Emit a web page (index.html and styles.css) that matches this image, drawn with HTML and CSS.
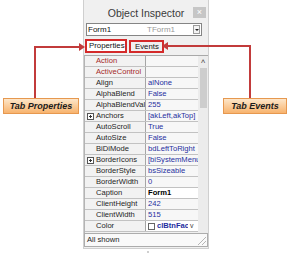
FILE: index.html
```html
<!DOCTYPE html>
<html lang="en">
<head>
    <meta charset="UTF-8">
    <title>Object Inspector</title>
    <link rel="stylesheet" href="styles.css">
</head>
<body>
    <div class="page">
        <div class="inspector">
            <div class="titlebar">
                <span></span>
                <span class="title">Object Inspector</span>
                <span class="close">&times;</span>
            </div>

            <div class="combo">
                <span class="combo-name">Form1</span>
                <span class="combo-type">TForm1</span>
                <span class="combo-btn"></span>
            </div>

            <div class="tabs">
                <span class="tab tab-props">Properties</span>
                <span class="tab tab-events">Events</span>
            </div>

            <div class="grid">
                <div class="rows">
                    <div class="row"><span class="name event">Action</span><span class="value"></span></div>
                    <div class="row"><span class="name event">ActiveControl</span><span class="value"></span></div>
                    <div class="row"><span class="name">Align</span><span class="value">alNone</span></div>
                    <div class="row"><span class="name">AlphaBlend</span><span class="value">False</span></div>
                    <div class="row"><span class="name">AlphaBlendValue</span><span class="value">255</span></div>
                    <div class="row"><span class="name expand"><span class="plus"></span>Anchors</span><span class="value">[akLeft,akTop]</span></div>
                    <div class="row"><span class="name">AutoScroll</span><span class="value">True</span></div>
                    <div class="row"><span class="name">AutoSize</span><span class="value">False</span></div>
                    <div class="row"><span class="name">BiDiMode</span><span class="value">bdLeftToRight</span></div>
                    <div class="row"><span class="name expand"><span class="plus"></span>BorderIcons</span><span class="value">[biSystemMenu]</span></div>
                    <div class="row"><span class="name">BorderStyle</span><span class="value">bsSizeable</span></div>
                    <div class="row"><span class="name">BorderWidth</span><span class="value">0</span></div>
                    <div class="row"><span class="name">Caption</span><span class="value value-edit">Form1</span></div>
                    <div class="row"><span class="name">ClientHeight</span><span class="value">242</span></div>
                    <div class="row"><span class="name">ClientWidth</span><span class="value">515</span></div>
                    <div class="row"><span class="name">Color</span><span class="value value-color"><span class="swatch"></span><b>clBtnFace</b><span class="drop">v</span></span></div>
                </div>
                <div class="scrollbar">
                    <span class="arrow">&#708;</span>
                    <span class="thumb"></span>
                </div>
            </div>

            <div class="status">
                <span>All shown</span>
                <span class="grip"></span>
            </div>
        </div>
        <div class="dot"></div>

        <svg class="callouts" width="290" height="255" viewBox="0 0 290 255">
            <polyline points="35,98 35,47 80,47" fill="none" stroke="#c23b3b" stroke-width="2"/>
            <polygon points="79,43 85,47 79,51" fill="#c23b3b"/>
            <polyline points="250,98 250,46 167,46" fill="none" stroke="#c23b3b" stroke-width="2"/>
            <polygon points="168,42 162,46 168,50" fill="#c23b3b"/>
        </svg>
        <div class="label label-props">Tab Properties</div>
        <div class="label label-events">Tab Events</div>
    </div>
</body>
</html>
```

FILE: styles.css
```css
* {
    margin: 0;
    padding: 0;
    box-sizing: border-box;
}

body {
    width: 290px;
    height: 255px;
    background: #fff;
    font-family: "Liberation Sans", Arial, sans-serif;
    overflow: hidden;
}

.page {
    position: relative;
    width: 290px;
    height: 255px;
}

.inspector {
    margin-left: 83px;
    width: 126px;
    height: 249px;
    background: #f0f0f0;
    border-left: 1px solid #cfcfcf;
    border-right: 1px solid #cfcfcf;
    border-bottom: 1px solid #cfcfcf;
    display: flex;
    flex-direction: column;
}

.titlebar {
    height: 22px;
    display: grid;
    grid-template-columns: 1fr auto 1fr;
    align-items: center;
}

.title {
    font-size: 10.5px;
    color: #3a3a3a;
    padding-top: 3px;
}

.close {
    justify-self: end;
    width: 13px;
    height: 11px;
    margin-right: 2px;
    margin-top: 3px;
    background: #c6c6c6;
    color: #fff;
    font-size: 9px;
    line-height: 11px;
    text-align: center;
}

.combo {
    margin: 1px 6px 0 2px;
    height: 13px;
    background: #fff;
    border: 1px solid #858585;
    display: flex;
    align-items: center;
    font-size: 8px;
}

.combo-name {
    width: 60px;
    padding-left: 1px;
    color: #111;
}

.combo-type {
    flex: 1;
    color: #9a9a9a;
}

.combo-btn {
    width: 7px;
    height: 9px;
    margin-right: 1px;
    border: 1px solid #9c9c9c;
    background: #f4f4f4;
    position: relative;
}

.combo-btn::after {
    content: "";
    position: absolute;
    left: 1px;
    top: 3px;
    border-left: 2px solid transparent;
    border-right: 2px solid transparent;
    border-top: 2px solid #222;
}

.tabs {
    display: flex;
    gap: 2px;
    margin: 3px 0 0 1px;
    height: 14px;
}

.tab {
    border: 2px solid #d42a2a;
    font-size: 7.8px;
    line-height: 10px;
    padding-left: 2px;
    color: #111;
}

.tab-props {
    width: 42px;
    background: #fff;
}

.tab-events {
    width: 35px;
    margin-top: 1px;
    padding-left: 4px;
}

.grid {
    margin-top: 2px;
    height: 178px;
    display: flex;
    border-top: 1px solid #a9a9a9;
    border-left: 1px solid #b4b4b4;
}

.rows {
    flex: 1;
    min-width: 0;
}

.row {
    height: 11px;
    display: flex;
    border-bottom: 1px solid #c2c2c2;
    font-size: 7.6px;
    line-height: 10px;
}

.name {
    width: 61px;
    padding-left: 11px;
    background: #f2f2f2;
    border-right: 1px solid #a6a6a6;
    color: #1e1e1e;
    white-space: nowrap;
    overflow: hidden;
    display: flex;
    align-items: center;
}

.name.event {
    color: #a52a2a;
}

.name.expand {
    padding-left: 2px;
}

.plus {
    width: 7px;
    height: 7px;
    margin-right: 2px;
    border: 1px solid #555;
    background: #fff;
    position: relative;
    flex: none;
}

.plus::before,
.plus::after {
    content: "";
    position: absolute;
    background: #333;
}

.plus::before {
    left: 1px;
    top: 2px;
    width: 3px;
    height: 1px;
}

.plus::after {
    left: 2px;
    top: 1px;
    width: 1px;
    height: 3px;
}

.value {
    flex: 1;
    min-width: 0;
    padding-left: 2px;
    background: #f7f7f7;
    color: #1f2fa0;
    white-space: nowrap;
    overflow: hidden;
}

.value-edit {
    background: #fff;
    color: #000;
    font-weight: bold;
}

.value-color {
    display: flex;
    align-items: center;
    background: #fff;
}

.value-color b {
    flex: 1;
    min-width: 0;
    overflow: hidden;
}

.swatch {
    width: 7px;
    height: 7px;
    margin-right: 2px;
    border: 1px solid #666;
    background: #fff;
    flex: none;
}

.drop {
    width: 6px;
    margin: 0 2px 0 2px;
    flex: none;
    color: #444;
    font-size: 7px;
}

.scrollbar {
    width: 10px;
    background: #ececec;
    display: flex;
    flex-direction: column;
    align-items: center;
}

.arrow {
    font-size: 8px;
    line-height: 11px;
    height: 11px;
    color: #444;
}

.thumb {
    margin-top: 1px;
    width: 7px;
    height: 40px;
    background: #cdcdcd;
}

.status {
    height: 14px;
    border: 1px solid #acacac;
    background: #f9f9f9;
    font-size: 7.6px;
    line-height: 12px;
    padding-left: 2px;
    color: #1e1e1e;
    display: flex;
    justify-content: space-between;
}

.grip {
    width: 8px;
    height: 8px;
    margin: 3px 1px 0 0;
    background: linear-gradient(135deg, transparent 45%, #b5b5b5 45%, #b5b5b5 55%, transparent 55%, transparent 70%, #b5b5b5 70%, #b5b5b5 80%, transparent 80%);
}

.dot {
    width: 2px;
    height: 2px;
    margin: 2px 0 0 147px;
    background: #cfcfcf;
}

.callouts {
    position: absolute;
    left: 0;
    top: 0;
    pointer-events: none;
}

.label {
    position: absolute;
    top: 98px;
    height: 16px;
    border: 1px solid #e6984f;
    background: linear-gradient(#fde6c9, #f8b36d);
    font-size: 9px;
    font-weight: bold;
    font-style: italic;
    line-height: 14px;
    text-align: center;
    color: #1c1c1c;
}

.label-props {
    left: 3px;
    width: 76px;
}

.label-events {
    left: 223px;
    width: 64px;
}
```
